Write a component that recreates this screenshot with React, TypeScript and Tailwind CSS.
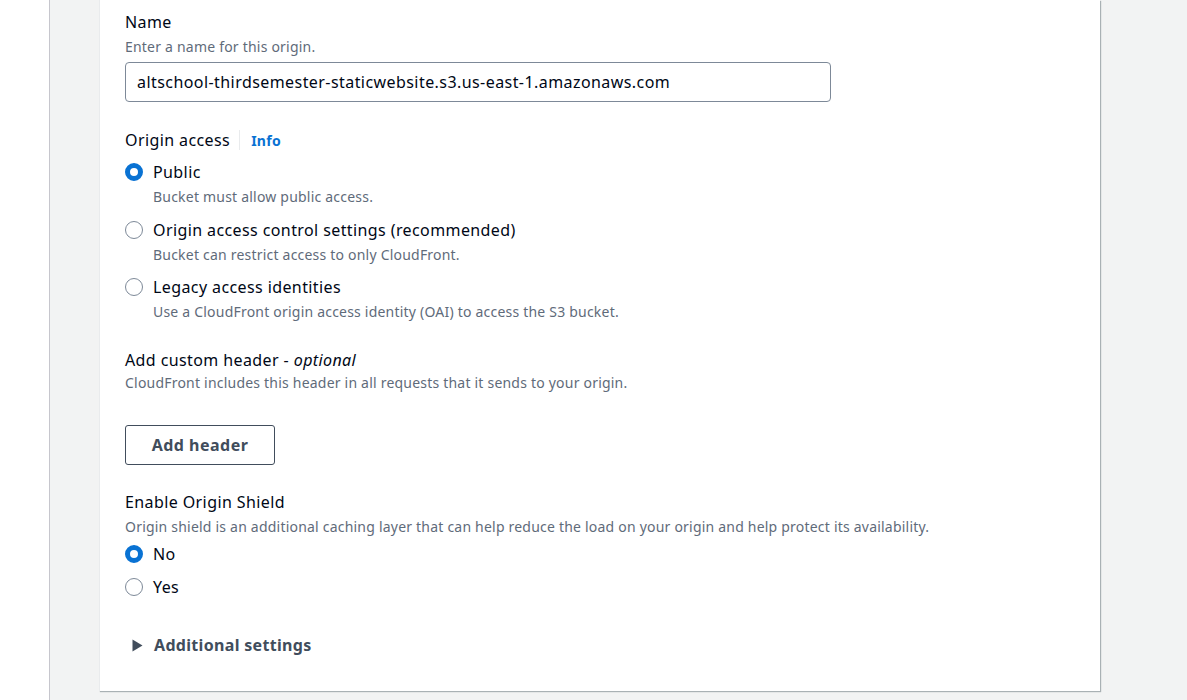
import React from 'react'

const font = { fontFamily: '"Noto Sans", "Open Sans", sans-serif' }

function Radio({ checked, label, hint }: { checked?: boolean; label: string; hint?: string }) {
  return (
    <div className="flex items-start gap-[10px]">
      <span
        className={
          checked
            ? 'mt-[3px] h-[18px] w-[18px] shrink-0 rounded-full border-[5px] border-[#0972d3] bg-white'
            : 'mt-[3px] h-[18px] w-[18px] shrink-0 rounded-full border-[1.5px] border-[#7d8998] bg-white'
        }
      />
      <div>
        <div className="text-[16px] leading-[24px] tracking-[0.025em] text-[#000716]">{label}</div>
        {hint && <div className="mt-[2px] text-[14px] leading-[22px] tracking-[0.015em] text-[#5f6b7a]">{hint}</div>}
      </div>
    </div>
  )
}

export default function App() {
  return (
    <div className="flex h-[700px] w-full overflow-hidden bg-[#f2f3f3]" style={font}>
      <div className="w-[50px] shrink-0 border-r border-[#c6c6cd] bg-white" />
      <div className="w-[49px] shrink-0" />
      <div className="flex h-[691px] w-[1001px] shrink-0 flex-col border-l border-[#e9ebed] bg-white pl-[25px] shadow-[1px_1px_1px_0_rgba(0,28,36,0.3)]">
        <div className="mt-[10px] text-[16px] leading-[24px] tracking-[0.025em] text-[#000716]">Name</div>
        <div className="mt-[2px] text-[14px] leading-[22px] tracking-[0.015em] text-[#5f6b7a]">Enter a name for this origin.</div>
        <div className="mt-[4px] flex h-[40px] w-[706px] items-center rounded-[4px] border border-[#7d8998] px-[11px] text-[16px] tracking-[0.027em] text-[#000716]">
          altschool-thirdsemester-staticwebsite.s3.us-east-1.amazonaws.com
        </div>

        <div className="mt-[26px] flex items-center">
          <span className="text-[16px] leading-[24px] tracking-[0.025em] text-[#000716]">Origin access</span>
          <span className="ml-[9px] mr-[11px] h-[20px] w-px bg-[#e9ebed]" />
          <span className="text-[14px] font-bold tracking-[0.02em] text-[#0972d3]">Info</span>
        </div>

        <div className="mt-[8px] flex flex-col gap-[9.5px]">
          <Radio checked label="Public" hint="Bucket must allow public access." />
          <Radio label="Origin access control settings (recommended)" hint="Bucket can restrict access to only CloudFront." />
          <Radio label="Legacy access identities" hint="Use a CloudFront origin access identity (OAI) to access the S3 bucket." />
        </div>

        <div className="mt-[25px] text-[16px] leading-[24px] tracking-[0.025em] text-[#000716]">
          Add custom header - <i>optional</i>
        </div>
        <div className="text-[14px] leading-[22px] tracking-[0.015em] text-[#5f6b7a]">
          CloudFront includes this header in all requests that it sends to your origin.
        </div>

        <button className="mt-[31px] h-[40px] w-[150px] rounded-[3px] border border-[#414d5c] text-[16px] font-bold tracking-[0.03em] text-[#414d5c]">
          Add header
        </button>

        <div className="mt-[25px] text-[16px] leading-[24px] tracking-[0.025em] text-[#000716]">Enable Origin Shield</div>
        <div className="mt-[2px] text-[14px] leading-[22px] tracking-[0.015em] text-[#5f6b7a]">
          Origin shield is an additional caching layer that can help reduce the load on your origin and help protect its availability.
        </div>
        <div className="mt-[4px] flex flex-col gap-[9px]">
          <Radio checked label="No" />
          <Radio label="Yes" />
        </div>

        <div className="mt-[34px] flex items-center gap-[11px] pl-[7px]">
          <svg width="11" height="13" viewBox="0 0 11 13">
            <path d="M0.5 0.5 L10.5 6.5 L0.5 12.5 Z" fill="#414d5c" />
          </svg>
          <span className="text-[16px] font-bold tracking-[0.02em] text-[#414d5c]">Additional settings</span>
        </div>
      </div>
    </div>
  )
}
